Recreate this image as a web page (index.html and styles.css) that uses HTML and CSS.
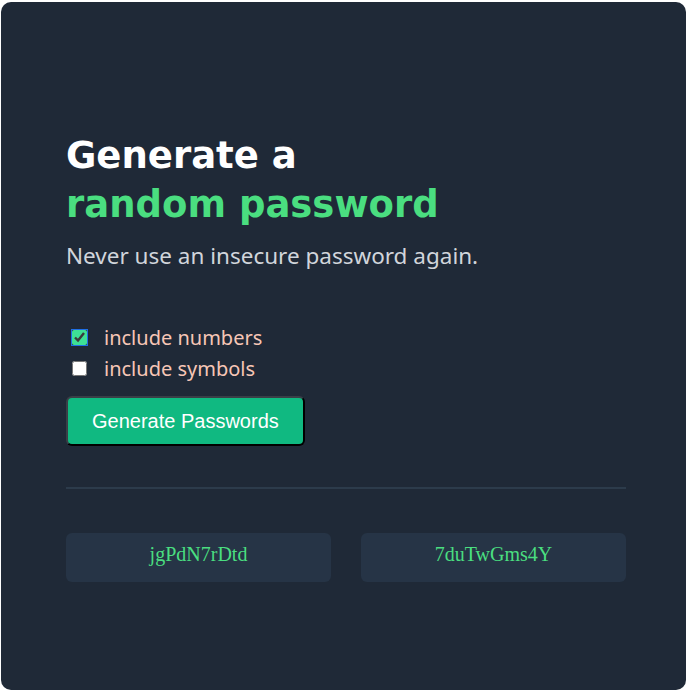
FILE: index.html
```html
<!DOCTYPE html>
<html lang="en">
<head>
<meta charset="utf-8">
<title>Password Generator</title>
<link rel="stylesheet" href="styles.css">
</head>
<body>
<main class="card">
  <h1 class="title">Generate a<br><span class="accent">random password</span></h1>
  <p class="subtitle">Never use an insecure password again.</p>
  <div class="options">
    <label class="option"><input type="checkbox" class="check check-on" checked><span>include numbers</span></label>
    <label class="option"><input type="checkbox" class="check"><span>include symbols</span></label>
  </div>
  <button class="generate" type="button">Generate Passwords</button>
  <hr class="divider">
  <div class="results">
    <div class="pw">jgPdN7rDtd</div>
    <div class="pw">7duTwGms4Y</div>
  </div>
</main>
</body>
</html>
```
FILE: styles.css
```css
html, body {
  margin: 0;
  padding: 0;
  background: #ffffff;
}
body {
  padding: 2px 1px 0 1px;
}
.card {
  box-sizing: border-box;
  height: 688px;
  background: #1f2937;
  border-radius: 10px;
  padding: 129px 60px 0 65px;
}
.title {
  margin: 0;
  font-family: "DejaVu Sans", sans-serif;
  font-weight: 700;
  font-size: 37px;
  line-height: 49px;
  color: #ffffff;
}
.accent {
  color: #4ade80;
}
.subtitle {
  margin: 13px 0 0 0;
  font-family: "Noto Sans", "Open Sans", sans-serif;
  font-size: 22.5px;
  line-height: 28px;
  color: #d1d5db;
}
.options {
  margin-top: 54px;
  display: flex;
  flex-direction: column;
  gap: 4px;
}
.option {
  display: flex;
  align-items: center;
  gap: 17px;
  font-family: "Noto Sans", "Open Sans", sans-serif;
  font-size: 20px;
  line-height: 27px;
  color: #f7c6b6;
}
.check {
  width: 15px;
  height: 15px;
  margin: 0 0 0 6px;
  accent-color: #3ee095;
}
.check-on {
  outline: 1px solid #1f6fe5;
  outline-offset: 0;
}
.generate {
  margin-top: 14px;
  height: 50px;
  padding: 0 24px;
  font-family: "Liberation Sans", Arial, sans-serif;
  font-size: 20px;
  color: #ffffff;
  background: #10b981;
  border: 2px outset #3a3f47;
  border-radius: 6px;
}
.divider {
  margin: 41px 0 0 0;
  border: 0;
  height: 2px;
  background: #2c3b4b;
}
.results {
  margin-top: 44px;
  display: grid;
  grid-template-columns: 1fr 1fr;
  gap: 30px;
}
.pw {
  box-sizing: border-box;
  height: 49px;
  padding-top: 10px;
  background: #263446;
  border-radius: 6px;
  text-align: center;
  font-family: "Liberation Serif", "Times New Roman", serif;
  font-size: 20px;
  line-height: 22px;
  color: #4ade80;
}
```
